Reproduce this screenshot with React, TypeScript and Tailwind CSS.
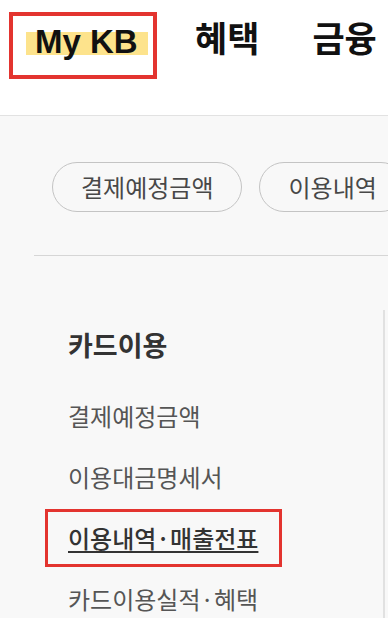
import React from 'react';

const chips = ['결제예정금액', '이용내역'];

const menuItems = [
  { label: '결제예정금액', active: false },
  { label: '이용대금명세서', active: false },
  { label: '이용내역·매출전표', active: true },
  { label: '카드이용실적·혜택', active: false },
];

export default function App() {
  return (
    <div className="w-[388px] h-[618px] overflow-hidden bg-[#f8f8f8] font-['Noto_Sans_CJK_KR','Noto_Sans',sans-serif]">
      {/* Top nav */}
      <header className="h-[116px] bg-white border-b border-[#e2e2e2] flex items-start">
        <div className="shrink-0 ml-[9px] mt-[12px] w-[148px] h-[67px] border-4 border-[#e3342f] pl-[13px] pt-[16px]">
          <span className="block w-[122px] h-[23px] bg-[#fde38c] pl-[9px] leading-[19px] text-[33px] font-bold text-[#111] font-['Liberation_Sans',sans-serif] whitespace-nowrap">
            My KB
          </span>
        </div>
        <span className="shrink-0 ml-[38px] mt-[19px] text-[35px] leading-[35px] font-bold text-[#111] whitespace-nowrap">
          혜택
        </span>
        <span className="shrink-0 ml-[53px] mt-[19px] text-[35px] leading-[35px] font-bold text-[#111] whitespace-nowrap">
          금융
        </span>
      </header>

      {/* Quick chips */}
      <div className="flex gap-[17px] pl-[52px] pt-[46px] whitespace-nowrap">
        {chips.map((c) => (
          <div
            key={c}
            className="shrink-0 h-[50px] px-[28px] rounded-full border border-[#c4c4c4] flex items-center text-[24px] text-[#484848]"
          >
            {c}
          </div>
        ))}
      </div>

      <div className="ml-[34px] mt-[43px] h-px bg-[#d6d6d6]" />

      {/* Side menu */}
      <nav className="ml-[34px] mt-[54px] w-[351px] border-r-2 border-[#e1e1e1] h-[320px]">
        <div className="h-[70px] pl-[34px] flex items-center text-[27px] font-bold text-[#333]">
          카드이용
        </div>
        <div className="mt-[5px] flex flex-col">
          {menuItems.map((m) =>
            m.active ? (
              <div key={m.label} className="h-[61px] flex items-center">
                <div className="ml-[11px] w-[237px] h-[58px] border-[3px] border-[#e3342f] pl-[20px] flex items-center text-[24px] text-[#333] font-medium underline underline-offset-[3px] decoration-[1.5px] whitespace-nowrap">
                  {m.label}
                </div>
              </div>
            ) : (
              <div
                key={m.label}
                className="h-[61px] pl-[34px] flex items-center text-[24px] text-[#555] whitespace-nowrap"
              >
                {m.label}
              </div>
            )
          )}
        </div>
      </nav>
    </div>
  );
}
